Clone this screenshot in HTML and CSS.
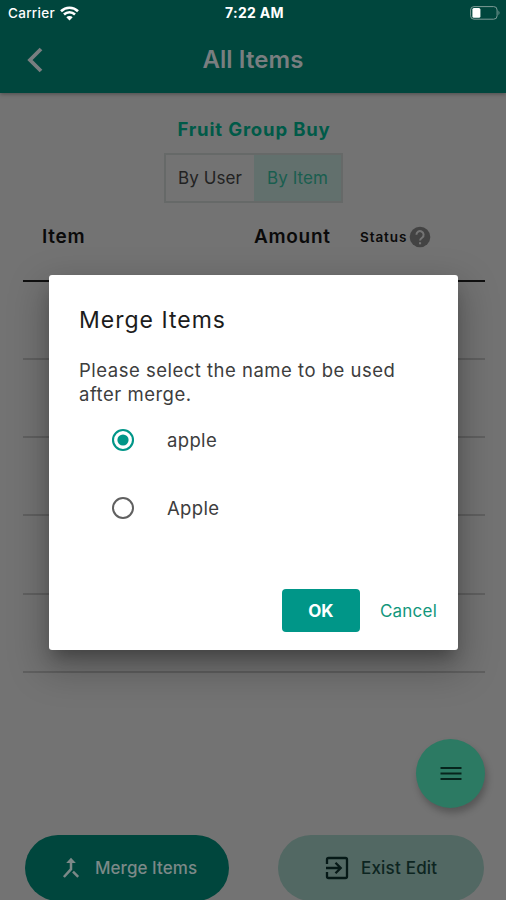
FILE: index.html
```html
<!DOCTYPE html>
<html lang="en">
<head>
<meta charset="utf-8">
<title>All Items</title>
<link rel="stylesheet" href="styles.css">
</head>
<body>
<div class="screen">
  <header class="header">
    <div class="statusbar">
      <div class="carrier"><span>Carrier</span>
        <svg width="19" height="15" viewBox="0 0 19 15" fill="none" stroke="#fff" stroke-width="2.6"><path d="M1 5.2a12.2 12.2 0 0 1 17 0M4 8.5a8 8 0 0 1 11 0"/><path d="M9.5 14.5 6.3 11.2a4.6 4.6 0 0 1 6.4 0z" fill="#fff" stroke="none"/></svg>
      </div>
      <div class="time">7:22 AM</div>
      <svg class="battery" width="31" height="14" viewBox="0 0 31 14"><rect x=".6" y=".6" width="26.5" height="12.6" rx="3.4" fill="none" stroke="#7d9c97"/><rect x="2.4" y="2" width="8" height="9.8" rx="1.5" fill="#fff"/><path d="M28.5 4.5q2 2.3 0 4.8z" fill="#7d9c97"/></svg>
    </div>
    <div class="appbar">
      <svg class="back" width="18" height="26" viewBox="0 0 18 26" fill="none" stroke="#797e80" stroke-width="3.8"><path d="M15 2 4 13l11 11"/></svg>
      <h1 class="title">All Items</h1>
    </div>
  </header>
  <main class="content">
    <h2 class="group">Fruit Group Buy</h2>
    <div class="tabs"><div class="tab tab-user"><span>By User</span></div><div class="tab tab-item"><span>By Item</span></div></div>
    <div class="table">
      <div class="thead">
        <div class="col-item"><span>Item</span></div><div class="col-amount"><span>Amount</span></div>
        <div class="col-status"><span>Status</span>
          <svg width="22" height="22" viewBox="0 0 22 22"><circle cx="11" cy="11" r="10.3" fill="#434343"/><path d="M7.4 8.7a3.6 3.6 0 1 1 5.9 2.8c-1.4 1.1-2.2 1.6-2.2 3.1" fill="none" stroke="#747474" stroke-width="2"/><rect x="10" y="16.2" width="2.1" height="2.1" fill="#747474"/></svg>
        </div>
      </div>
      <div class="row"></div><div class="row"></div><div class="row"></div><div class="row"></div><div class="row"></div>
    </div>
  </main>
  <button class="fab"><svg width="22" height="16" viewBox="0 0 22 16" stroke="#06241c" stroke-width="2.2"><path d="M.5 2h21M.5 7.500h21M.5 13h21"/></svg></button>
  <footer class="actions">
    <button class="pill pill-merge"><svg width="18" height="22" viewBox="0 0 18 22" fill="none" stroke="#7c8988" stroke-width="2.5"><path d="M9 5v7.2L1.9 20M11 14.6l5.2 5.2"/><path d="M9 .8 13.800 6H4.200z" fill="#7c8988" stroke="none"/></svg><span>Merge Items</span></button>
    <button class="pill pill-exit"><svg width="24" height="24" viewBox="0 0 24 24" fill="none" stroke="#061917" stroke-width="2.3"><path d="M2 8V3.6Q2 2 3.6 2h16.8Q22 2 22 3.6v16.8q0 1.6-1.6 1.6H3.6Q2 22 2 20.400V16M1 12h14M10.500 6.800 15.700 12l-5.200 5.200"/></svg><span>Exist Edit</span></button>
  </footer>
  <div class="dialog" role="dialog">
    <h3 class="dlg-title"><span>Merge Items</span></h3>
    <p class="dlg-text"><span>Please select the name to be used</span><br><span>after merge.</span></p>
    <div class="option"><svg width="24" height="24" viewBox="0 0 24 24"><circle cx="12" cy="12" r="10" fill="none" stroke="#009688" stroke-width="2.1"/><circle cx="12" cy="12" r="5.6" fill="#009688"/></svg><span>apple</span></div>
    <div class="option"><svg width="24" height="24" viewBox="0 0 24 24"><circle cx="12" cy="12" r="10" fill="none" stroke="#606060" stroke-width="2"/></svg><span>Apple</span></div>
    <div class="buttons"><button class="ok">OK</button><button class="cancel">Cancel</button></div>
  </div>
</div>
</body>
</html>
```
FILE: styles.css
```css
* { box-sizing: border-box; }
body { margin: 0; font-family: Inter, Roboto, sans-serif; }
button { border: 0; padding: 0; font-family: inherit; }
h1, h2, h3, p { margin: 0; }
svg { display: block; flex: none; }
.screen { position: relative; width: 506px; height: 900px; overflow: hidden; background: #737373; display: flex; flex-direction: column; }

.header { flex: none; height: 93px; background: #00463d; box-shadow: 0 1px 4px rgba(0,0,0,.35); }
.statusbar { height: 26px; display: grid; grid-template-columns: 1fr auto 1fr; align-items: center; padding: 0 5px 0 8px; color: #fff; }
.carrier { display: flex; align-items: center; gap: 5px; font-size: 13.5px; font-weight: 500; letter-spacing: .3px; }
.time { font-size: 14px; line-height: 16px; padding-bottom: 1px; font-weight: 700; letter-spacing: .3px; }
.battery { justify-self: end; }
.appbar { height: 67px; display: grid; grid-template-columns: 1fr auto 1fr; align-items: center; padding: 0 26px; }
.title { font-size: 24px; line-height: 30px; font-weight: 600; color: #797e80; letter-spacing: .1px; }

.content { flex: 1; padding: 25px 21px 0 23px; }
.group { text-align: center; font-size: 18.5px; line-height: 22px; font-weight: 700; color: #005a48; letter-spacing: .85px; }
.tabs { width: 179px; height: 50px; margin: 13px 0 0 141px; border: 2px solid #666968; display: flex; }
.tab { display: flex; align-items: center; justify-content: center; font-size: 17px; letter-spacing: .1px; }
.tab-user { width: 88px; color: #222; }
.tab-item { flex: 1; color: #195e4f; background: #62706d; }
.thead { height: 78.5px; padding: 23px 0 0 19px; display: flex; color: #0a0a0a; border-bottom: 2px solid #101010; font-size: 19px; line-height: 22px; font-weight: 600; letter-spacing: .7px; }
.col-item { width: 212px; }
.col-amount { width: 106px; }
.col-status { display: flex; align-items: center; height: 22px; gap: 2px; font-size: 13.5px; letter-spacing: .9px; }
.row { height: 78.3px; border-bottom: 2px solid #606060; }

.fab { position: absolute; left: 416px; top: 739px; width: 69px; height: 69px; border-radius: 50%; background: #2c7a63; display: flex; align-items: center; justify-content: center; box-shadow: 2px 5px 7px rgba(0,0,0,.25); }
.actions { flex: none; height: 65px; padding: 0 22px 0 25px; display: flex; justify-content: space-between; }
.pill { height: 66px; border-radius: 33px; display: flex; align-items: center; font-size: 17px; font-weight: 500; }
.pill-merge { width: 204px; padding-left: 37px; gap: 15px; background: #00463d; color: #7c8988; letter-spacing: .05px; }
.pill-exit { width: 206px; padding-left: 47px; gap: 12px; background: #526863; color: #0d2521; letter-spacing: .2px; }

.dialog { position: absolute; left: 49px; top: 275px; width: 409px; height: 375px; padding: 30px 21px 0 30px; border-radius: 3px; background: #fff; box-shadow: 0 11px 15px -5px rgba(0,0,0,.25), 0 15px 36px 5px rgba(0,0,0,.25); color: #3d3d3d; font-size: 18.5px; }
.dlg-title { font-size: 23px; line-height: 30px; font-weight: 400; letter-spacing: 1px; color: #1c1c1c; }
.dlg-text { margin-top: 24px; line-height: 23.5px; letter-spacing: .5px; white-space: nowrap; }
.option { height: 68px; padding-left: 32px; display: flex; align-items: center; gap: 32px; letter-spacing: .35px; }
.buttons { margin-top: 47px; display: flex; justify-content: flex-end; align-items: center; gap: 20px; }
.ok { width: 78px; height: 43px; border-radius: 4px; background: #009688; color: #fff; font-size: 17px; font-weight: 700; }
.cancel { background: none; color: #12977c; font-size: 17px; letter-spacing: .22px; }
```
